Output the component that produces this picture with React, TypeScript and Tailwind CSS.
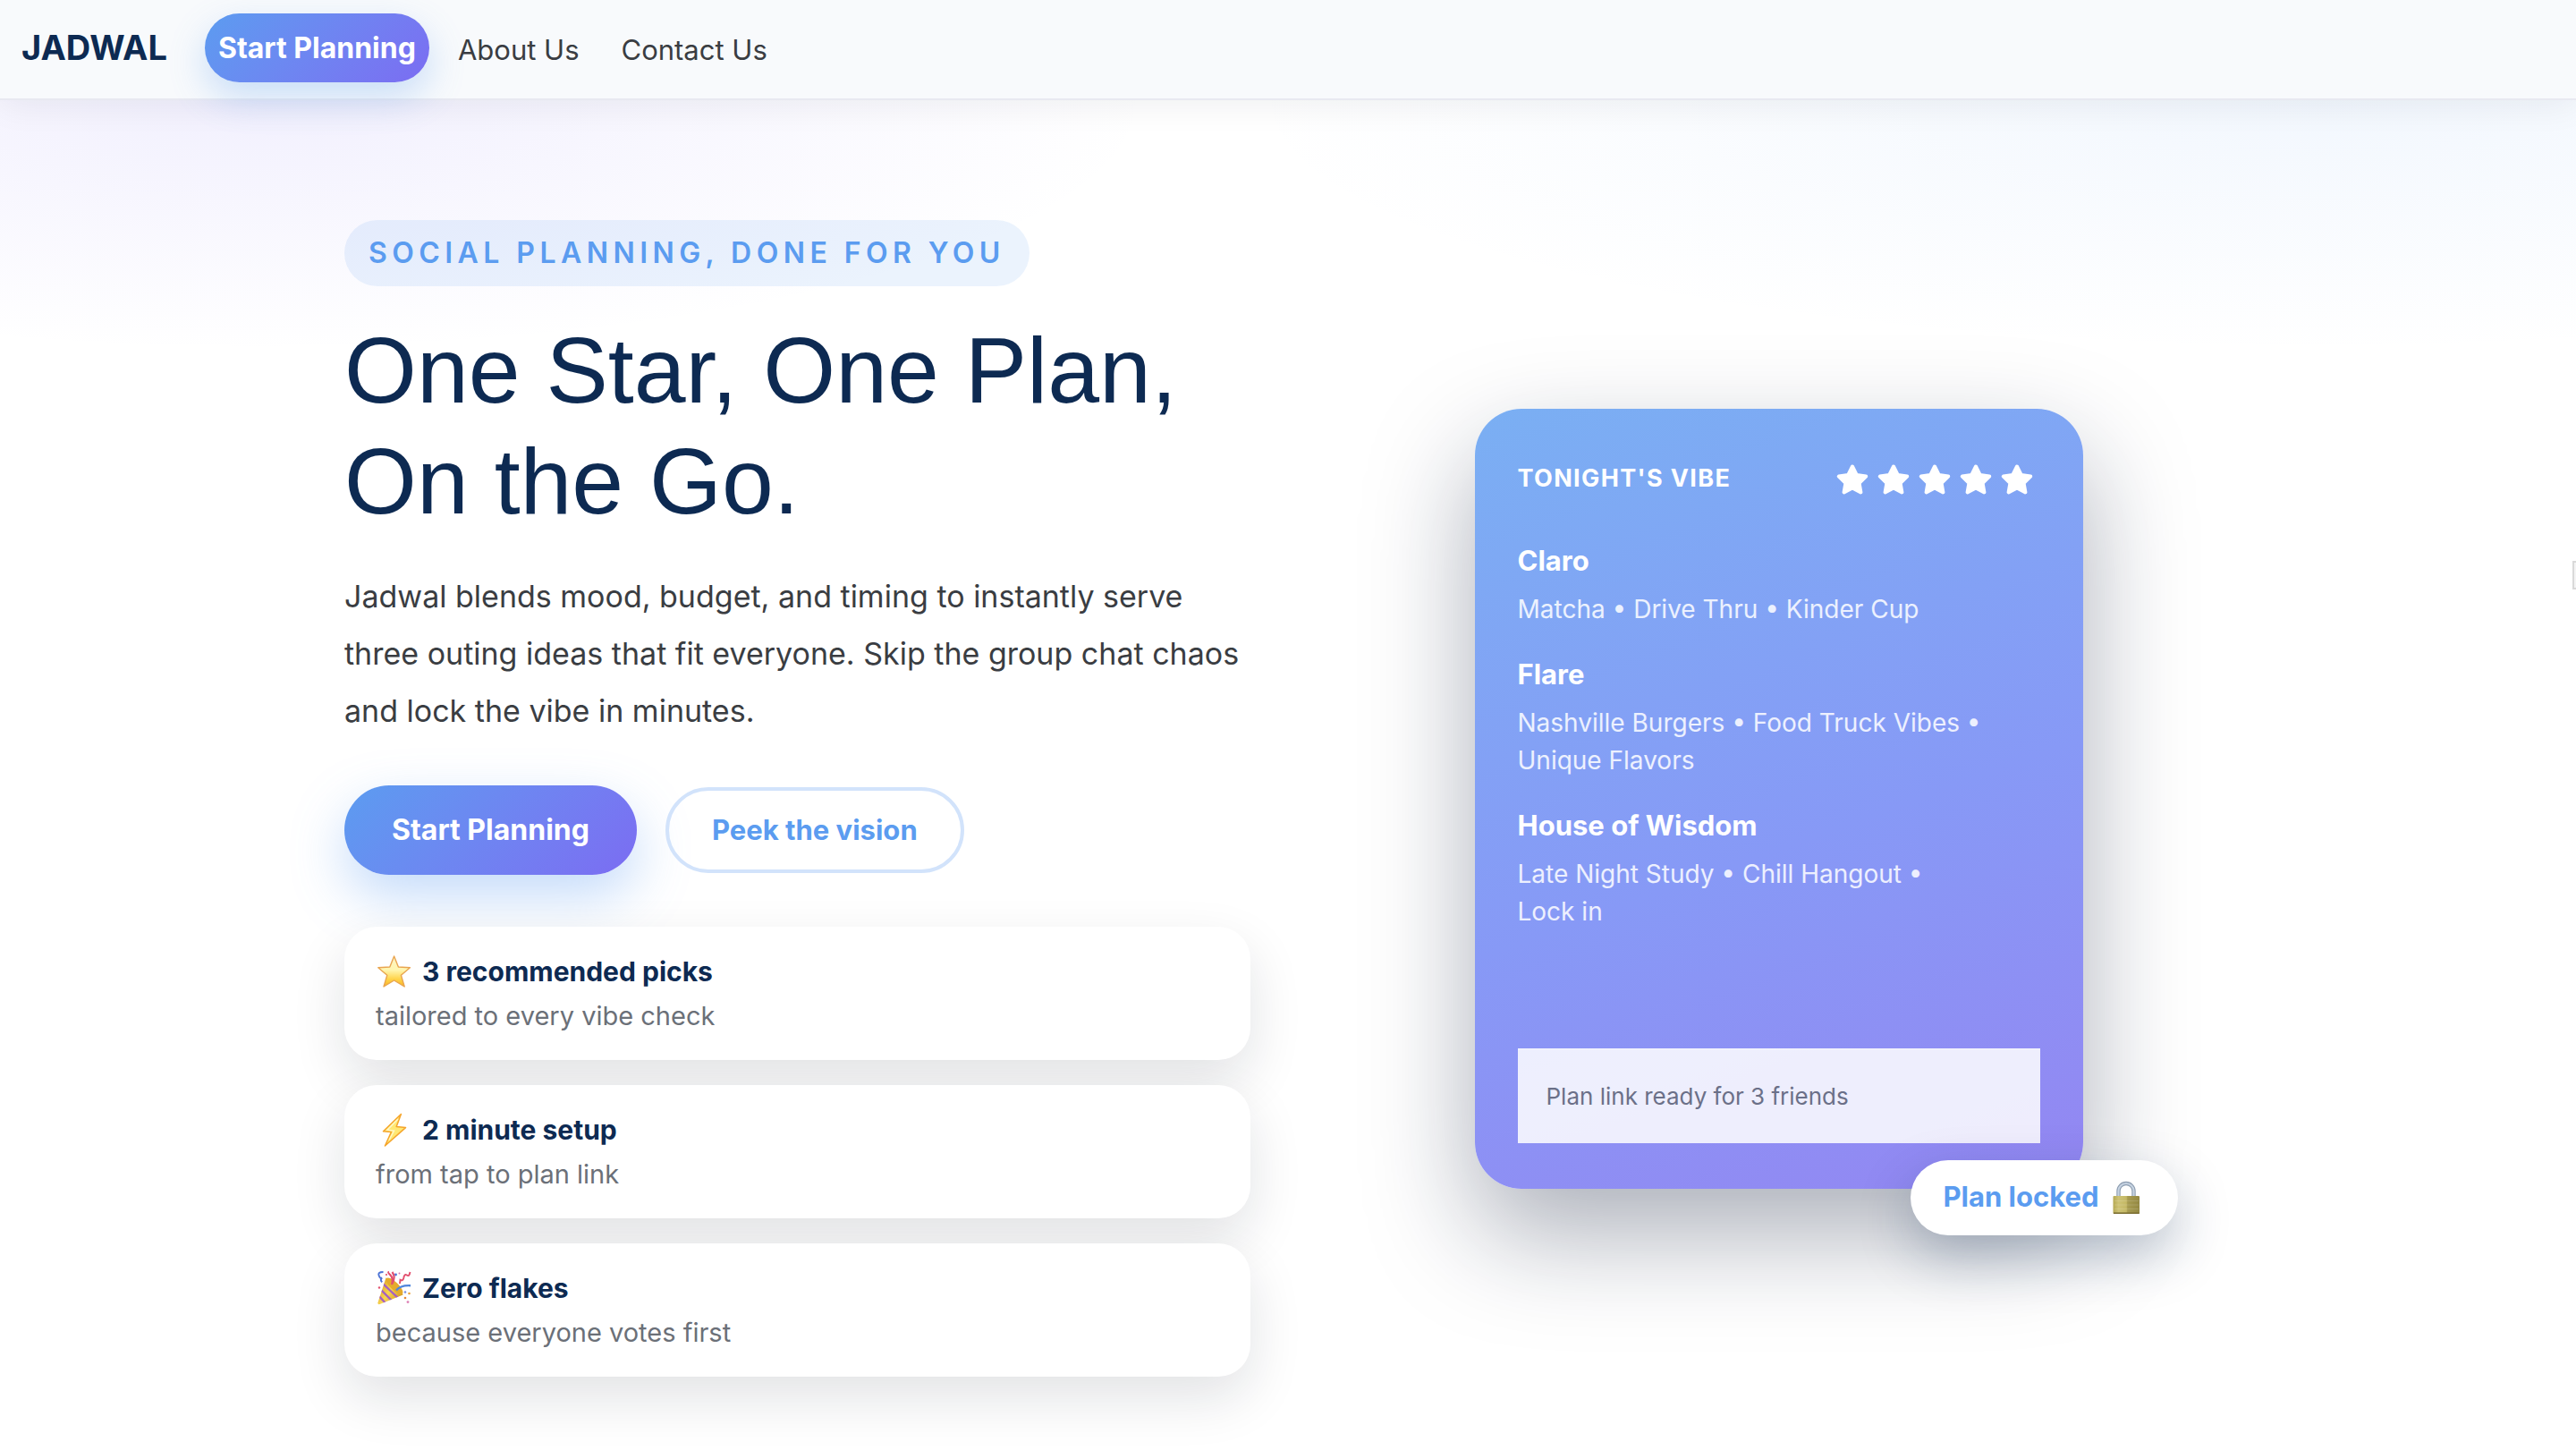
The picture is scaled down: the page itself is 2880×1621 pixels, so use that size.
import type { ReactNode } from "react";

function GoldStar() {
  return (
    <svg viewBox="0 0 40 40" className="size-10 shrink-0" role="img" aria-label="Star">
      <defs>
        <linearGradient id="starFill" x1="0" y1="0" x2="0" y2="1">
          <stop offset="0" stopColor="#fff3c4" />
          <stop offset="0.45" stopColor="#fff6b0" />
          <stop offset="0.75" stopColor="#ffd44a" />
          <stop offset="1" stopColor="#f9b420" />
        </linearGradient>
      </defs>
      <path
        d="M20.6 3 25.4 15 38.4 15.8 28.4 24.2 32.2 37 20.6 30 9 37 12.8 24.2 2.8 15.8 15.8 15Z"
        fill="url(#starFill)"
        stroke="#e9a550"
        strokeWidth="1.4"
        strokeLinejoin="round"
      />
    </svg>
  );
}

function Bolt() {
  return (
    <svg viewBox="0 0 40 40" className="size-10 shrink-0" role="img" aria-label="Lightning">
      <path
        d="M28.4 2.5 8.5 21.8 17.4 22.6 10.4 38 33.5 17.6 23.2 16.4Z"
        fill="#ffe873"
        stroke="#f5a52c"
        strokeWidth="1.5"
        strokeLinejoin="round"
      />
      <path d="M25 8 13 20.2 20.6 21 15 31.5" fill="none" stroke="#fff7c9" strokeWidth="1.4" />
    </svg>
  );
}

function Popper() {
  return (
    <svg viewBox="0 0 40 40" className="size-10 shrink-0" role="img" aria-label="Party popper">
      <defs>
        <linearGradient id="cone" x1="0" y1="0.2" x2="1" y2="0.9">
          <stop offset="0" stopColor="#d99a1f" />
          <stop offset="0.45" stopColor="#f8d551" />
          <stop offset="1" stopColor="#c98a1b" />
        </linearGradient>
        <clipPath id="coneClip">
          <path d="M11.5 8.5 2.4 36.6Q2.4 38.6 4.6 38L30.6 27.6Q26 13 11.5 8.5Z" />
        </clipPath>
      </defs>
      <path d="M11.5 8.5 2.4 36.6Q2.4 38.6 4.6 38L30.6 27.6Q26 13 11.5 8.5Z" fill="url(#cone)" />
      <g clipPath="url(#coneClip)" fill="none" stroke="#a45fc4" strokeWidth="2.4">
        <path d="M8 15 26 32" />
        <path d="M5 21 19 35" />
        <path d="M3 28 12 38" />
      </g>
      <ellipse cx="21" cy="17.6" rx="12.4" ry="4.4" transform="rotate(44 21 17.6)" fill="#e5ab2c" />
      <path d="M18 16Q20 9 16.5 5.5T15 2M18 16Q23 8 18.5 2" fill="none" stroke="#e2506f" strokeWidth="2.2" />
      <path d="M23 22.5Q28 16.5 39 17.2" fill="none" stroke="#4f86dc" strokeWidth="2.4" />
      <path d="M8.5 2Q2 2 3.6 6T7.2 8.4Q4.5 10.6 7.2 13.4" fill="none" stroke="#4c73d6" strokeWidth="2" />
      <path d="M38.5 2Q37.5 7.6 34.8 5.6T31.2 9Q30.4 12.4 27.5 10.8L27 15" fill="none" stroke="#e2506f" strokeWidth="1.9" />
      <circle cx="22.5" cy="5" r="1.4" fill="#4c73d6" />
      <circle cx="26.5" cy="3.4" r="1" fill="#d879b0" />
      <circle cx="12" cy="5" r="1.1" fill="#e2506f" />
      <circle cx="4" cy="19.5" r="1.2" fill="#e2506f" />
      <circle cx="33" cy="24.5" r="1.3" fill="#7a8fe0" />
      <circle cx="37.5" cy="26" r="1.3" fill="#e9a23a" />
      <circle cx="33" cy="31" r="1.3" fill="#e58a3c" />
      <circle cx="36" cy="35.6" r="1.4" fill="#dd7fb4" />
    </svg>
  );
}

function Padlock() {
  return (
    <svg viewBox="0 0 40 40" className="size-10 shrink-0" role="img" aria-label="Locked">
      <defs>
        <linearGradient id="brass" x1="0" y1="0" x2="1" y2="0">
          <stop offset="0" stopColor="#b5a852" />
          <stop offset="0.2" stopColor="#cdc274" />
          <stop offset="0.5" stopColor="#c5b966" />
          <stop offset="0.55" stopColor="#a79b50" />
          <stop offset="1" stopColor="#938842" />
        </linearGradient>
      </defs>
      <path d="M9.5 20V12.5a8.5 8.5 0 0 1 17 0V20" fill="none" stroke="#8d9db0" strokeWidth="4.4" />
      <path d="M9.5 20V12.5a8.5 8.5 0 0 1 17 0V20" fill="none" stroke="#c6d3e2" strokeWidth="2.2" />
      <rect x="3.5" y="18" width="29.5" height="20" rx="1" fill="url(#brass)" />
      <path d="M4 37.2H32.6" stroke="#7c6f33" strokeWidth="1.6" />
      <path d="M5 23.5H32M5 28H32M5 32.5H32" stroke="#ffffff" strokeOpacity="0.14" strokeWidth="1.2" />
    </svg>
  );
}

function WhiteStar() {
  return (
    <svg viewBox="0 0 36 36" className="size-9" aria-hidden="true">
      <path
        d="M18 3.5 22.7 13 33.2 14.6 25.6 22 27.4 32.4 18 27.5 8.6 32.4 10.4 22 2.8 14.6 13.3 13Z"
        fill="#fff"
        stroke="#fff"
        strokeWidth="4"
        strokeLinejoin="round"
      />
    </svg>
  );
}

const features: { icon: ReactNode; title: string; text: string }[] = [
  { icon: <GoldStar />, title: "3 recommended picks", text: "tailored to every vibe check" },
  { icon: <Bolt />, title: "2 minute setup", text: "from tap to plan link" },
  { icon: <Popper />, title: "Zero flakes", text: "because everyone votes first" },
];

const spots = [
  { name: "Claro", tags: "Matcha • Drive Thru • Kinder Cup" },
  { name: "Flare", tags: "Nashville Burgers • Food Truck Vibes • Unique Flavors" },
  { name: "House of Wisdom", tags: "Late Night Study • Chill Hangout • Lock\u00a0in" },
];

export default function App() {
  return (
    <div className="flex min-h-screen flex-col overflow-hidden bg-white font-[Inter,sans-serif] text-[#3a3d42]">
      <header className="relative z-10 flex h-28 items-center gap-[42px] border-b-2 border-[#e8e9f1] bg-[#f8fafc] pl-6 shadow-[0_4px_40px_rgba(15,23,42,0.07)]">
        <a href="#" className="mb-1 text-[38px] leading-none font-bold text-[#0d2a52]">
          JADWAL
        </a>
        <nav className="flex items-center gap-4 text-[31px] leading-[45px]">
          <a
            href="#plan"
            className="mb-1 rounded-full bg-linear-135 from-[#5b9cf0] to-[#7b6cf2] px-[15px] py-4 text-[32px] font-bold text-white shadow-[0_16px_40px_rgba(91,156,240,0.3)]"
          >
            Start Planning
          </a>
          <a href="#about" className="px-4">
            About Us
          </a>
          <a href="#contact" className="px-[15px]">
            Contact Us
          </a>
        </nav>
      </header>

      <main className="flex-1 bg-[radial-gradient(1000px_280px_at_10%_0,rgba(124,108,244,0.1),transparent),radial-gradient(1200px_280px_at_90%_0,rgba(91,156,240,0.08),transparent)] pt-[134px] pb-16">
        <div className="mx-auto grid max-w-[2110px] grid-cols-2 items-center gap-[84px]">
          <section className="flex flex-col items-start">
            <p className="rounded-full bg-[#5b9cf0]/12 px-[27px] py-4 text-[32px] leading-[42px] font-semibold tracking-[0.17em] text-[#5b9cf0] uppercase">
              Social planning, done for you
            </p>
            <h1 className="mt-8 font-['Liberation_Sans',Arial,sans-serif] text-[104px] leading-[124px] text-[#0d2a52]">
              One Star, One Plan,
              <br />
              On the Go.
            </h1>
            <p className="mt-[35px] text-[34px] leading-[64px]">
              Jadwal blends mood, budget, and timing to instantly serve three outing ideas that fit everyone. Skip the
              group chat chaos and lock the vibe in minutes.
            </p>
            <div className="mt-[51px] flex items-center gap-8 leading-[44px] font-bold">
              <button
                type="button"
                className="rounded-full bg-linear-135 from-[#5b9cf0] to-[#7b6cf2] px-[53px] py-7 text-[32px] text-white shadow-[0_24px_60px_rgba(91,156,240,0.36)]"
              >
                Start Planning
              </button>
              <button
                type="button"
                className="rounded-full border-4 border-[#d2e3fb] px-12 py-[22px] text-[31px] text-[#5b9cf0]"
              >
                Peek the vision
              </button>
            </div>
            <ul className="mt-[58px] flex w-full flex-col gap-7">
              {features.map((f) => (
                <li
                  key={f.title}
                  className="rounded-[36px] bg-white px-[35px] pt-[25px] pb-6 shadow-[0_24px_60px_rgba(15,23,42,0.12)]"
                >
                  <h2 className="flex items-center gap-3 text-[30px] leading-[50px] font-bold text-[#0d2a52]">
                    {f.icon}
                    {f.title}
                  </h2>
                  <p className="text-[29px] leading-[50px] text-[#6b7078]">{f.text}</p>
                </li>
              ))}
            </ul>
          </section>

          <section className="flex justify-center">
            <article className="relative flex min-h-[872px] w-[680px] flex-col rounded-[52px] bg-linear-160 from-[#7aaff3] via-[#8799f6] via-55% to-[#9386f2] px-12 pt-12 pb-[51px] text-white shadow-[0_50px_120px_rgba(15,25,55,0.35)]">
              <div className="flex h-[62px] items-center justify-between">
                <h2 className="text-[27px] font-bold tracking-[0.05em] uppercase">Tonight's vibe</h2>
                <div className="mr-2 flex gap-[10px]" role="img" aria-label="5 stars">
                  <WhiteStar />
                  <WhiteStar />
                  <WhiteStar />
                  <WhiteStar />
                  <WhiteStar />
                </div>
              </div>
              <ul className="mt-[37px] flex flex-col gap-[29px]">
                {spots.map((s) => (
                  <li key={s.name}>
                    <h3 className="text-[31px] leading-[46px] font-bold">{s.name}</h3>
                    <p className="mt-[10px] max-w-[90%] text-[28px] leading-[42px] text-white/85">{s.tags}</p>
                  </li>
                ))}
              </ul>
              <p className="mt-auto border-t-2 border-white/20 bg-white/85 px-8 py-9 text-[26px] leading-8 text-[#6b7088]">
                Plan link ready for 3 friends
              </p>
              <div className="absolute -right-[106px] -bottom-[52px] flex h-[84px] items-center gap-3 rounded-full bg-white px-9 text-[31px] font-bold whitespace-nowrap text-[#5b9cf0] shadow-[0_24px_60px_rgba(13,42,82,0.28)]">
                Plan locked
                <Padlock />
              </div>
            </article>
          </section>
        </div>
      </main>

      <div className="fixed top-[627px] right-0 h-8 w-1 border-y-2 border-l-2 border-[#d9d9d9] bg-[#f4f4f4]" />
    </div>
  );
}
